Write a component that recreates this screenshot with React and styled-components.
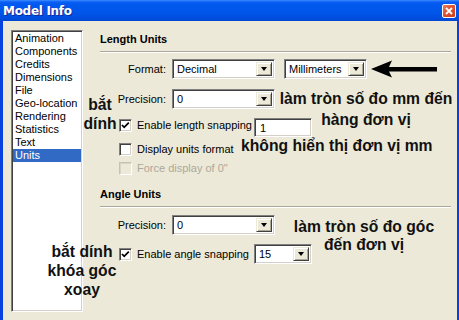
import styled, { createGlobalStyle } from "styled-components";

const Global = createGlobalStyle`
  html, body {
    margin: 0;
    padding: 0;
    background: #ece9d8;
  }
  body {
    font-family: "Liberation Sans", Arial, sans-serif;
    font-size: 11px;
    color: #000;
  }
`;

const Window = styled.div`
  position: relative;
  width: 459px;
  height: 320px;
  overflow: hidden;
  display: flex;
  flex-direction: column;
`;

const TitleBar = styled.div`
  height: 21px;
  flex: 0 0 21px;
  display: flex;
  align-items: center;
  justify-content: space-between;
  padding: 0 3px 0 3px;
  background: linear-gradient(
    to bottom,
    #3d8dff 0,
    #0b5ef5 2px,
    #0058ee 5px,
    #0056e8 60%,
    #004fe0 85%,
    #0046d2 100%
  );
`;

const Title = styled.span`
  color: #fff;
  font-family: "DejaVu Sans", "Liberation Sans", sans-serif;
  font-weight: bold;
  font-size: 12px;
  letter-spacing: -0.3px;
  text-shadow: 1px 1px 0 #0a2b9c;
`;

const CloseButton = styled.div`
  width: 12px;
  height: 12px;
  border: 1px solid #fff;
  border-radius: 2px;
  background: linear-gradient(135deg, #ec7a5a 0%, #e0522f 45%, #c9401e 100%);
  display: flex;
  align-items: center;
  justify-content: center;
`;

const Client = styled.div`
  flex: 1;
  display: flex;
  align-items: flex-start;
  background: #ece9d8;
  border-left: 3px solid #0842e0;
  border-right: 2px solid #0842e0;
  padding: 9px 6px 0 8px;
`;

const ListBox = styled.div`
  flex: 0 0 72px;
  height: 282px;
  box-sizing: border-box;
  background: #fff;
  border: 1px solid;
  border-color: #808080 #fff #fff #808080;
  box-shadow: inset 1px 1px #404040, inset -1px -1px #d4d0c8;
  padding: 1px;
`;

const ListItem = styled.div`
  height: 13px;
  line-height: 13px;
  padding-left: 2px;
  white-space: nowrap;
  background: ${(p) => (p.$selected ? "#316ac5" : "transparent")};
  color: ${(p) => (p.$selected ? "#fff" : "#000")};
`;

const Panel = styled.div`
  flex: 1;
  margin-left: 17px;
  display: flex;
  flex-direction: column;
`;

const SectionTitle = styled.div`
  font-weight: bold;
  line-height: 13px;
  margin-top: ${(p) => p.$top}px;
`;

const Rule = styled.div`
  height: 0;
  border-top: 1px solid #aca899;
  border-bottom: 1px solid #fff;
  margin-top: 5px;
`;

const FieldRow = styled.div`
  display: flex;
  align-items: center;
  height: 20px;
  margin-top: ${(p) => p.$top}px;
`;

const Label = styled.div`
  flex: 0 0 72px;
  box-sizing: border-box;
  padding-right: 6px;
  text-align: right;
`;

const Sunken = styled.div`
  box-sizing: border-box;
  background: #fff;
  border: 1px solid;
  border-color: #808080 #fff #fff #808080;
  box-shadow: inset 1px 1px #404040, inset -1px -1px #d4d0c8;
`;

const ComboBox = styled(Sunken)`
  width: ${(p) => p.$w}px;
  height: 20px;
  margin-left: ${(p) => p.$ml || 0}px;
  display: flex;
  align-items: center;
  padding: 2px;
  flex-shrink: 0;
`;

const Value = styled.span`
  flex: 1;
  padding-left: 2px;
  white-space: nowrap;
`;

const DropButton = styled.div`
  width: 16px;
  align-self: stretch;
  box-sizing: border-box;
  background: #ece9d8;
  border: 1px solid;
  border-color: #ece9d8 #404040 #404040 #ece9d8;
  box-shadow: inset 1px 1px #fff, inset -1px -1px #aca899;
  display: flex;
  align-items: center;
  justify-content: center;

  &::after {
    content: "";
    border-left: 3.5px solid transparent;
    border-right: 3.5px solid transparent;
    border-top: 4px solid #000;
  }
`;

const TextBox = styled(Sunken)`
  width: ${(p) => p.$w}px;
  height: 19px;
  margin-top: -1px;
  padding: 3px 0 0 5px;
  line-height: 13px;
  flex-shrink: 0;
`;

const CheckRow = styled.div`
  display: flex;
  align-items: ${(p) => (p.$center ? "center" : "flex-start")};
  height: ${(p) => (p.$center ? 20 : 13)}px;
  padding-left: 19px;
  margin-top: ${(p) => p.$top}px;
  color: ${(p) => (p.$disabled ? "#aca899" : "#000")};
`;

const Box = styled(Sunken)`
  width: 13px;
  height: 13px;
  flex: 0 0 13px;
  background: ${(p) => (p.$disabled ? "#ece9d8" : "#fff")};
  border-color: ${(p) =>
    p.$disabled ? "#c5c2b2 #fff #fff #c5c2b2" : "#808080 #fff #fff #808080"};
  box-shadow: ${(p) =>
    p.$disabled
      ? "inset 1px 1px #d8d5c6"
      : "inset 1px 1px #404040, inset -1px -1px #d4d0c8"};
  display: flex;
  align-items: center;
  justify-content: center;
`;

const CheckText = styled.span`
  line-height: 13px;
  margin-left: 5px;
  white-space: nowrap;
  flex: ${(p) => (p.$w ? `0 0 ${p.$w}px` : "0 0 auto")};
`;

const Note = styled.div`
  position: absolute;
  left: ${(p) => p.$x}px;
  top: ${(p) => p.$y}px;
  width: ${(p) => p.$w}px;
  text-align: ${(p) => (p.$left ? "left" : "center")};
  font-family: "Liberation Sans", Arial, sans-serif;
  font-weight: bold;
  font-size: 15.7px;
  line-height: ${(p) => p.$lh || 19}px;
  color: #111;
  white-space: nowrap;
`;

const items = [
  "Animation",
  "Components",
  "Credits",
  "Dimensions",
  "File",
  "Geo-location",
  "Rendering",
  "Statistics",
  "Text",
  "Units",
];

const Check = ({ checked, disabled }) => (
  <Box $disabled={disabled}>
    {checked && (
      <svg width="9" height="9" viewBox="0 0 9 9">
        <polyline
          points="1,4 3.2,6.3 7.8,1.7"
          fill="none"
          stroke="#000"
          strokeWidth="1.8"
        />
      </svg>
    )}
  </Box>
);

const Combo = ({ value, ...rest }) => (
  <ComboBox {...rest}>
    <Value>{value}</Value>
    <DropButton />
  </ComboBox>
);

const Arrow = () => (
  <svg width="67" height="20" viewBox="0 0 67 20" style={{ marginLeft: 4 }}>
    <path d="M0 10 L21 1.5 L18 8 L66 8 L66 12.5 L18 12.5 L21 18.5 Z" fill="#000" />
  </svg>
);

export default function App() {
  return (
    <>
      <Global />
      <Window>
        <TitleBar>
          <Title>Model Info</Title>
          <CloseButton>
            <svg width="8" height="8" viewBox="0 0 8 8">
              <path d="M1 1 L7 7 M7 1 L1 7" stroke="#fff" strokeWidth="1.8" />
            </svg>
          </CloseButton>
        </TitleBar>
        <Client>
          <ListBox>
            {items.map((it) => (
              <ListItem key={it} $selected={it === "Units"}>
                {it}
              </ListItem>
            ))}
          </ListBox>
          <Panel>
            <SectionTitle $top={3}>Length Units</SectionTitle>
            <Rule />
            <FieldRow $top={6}>
              <Label>Format:</Label>
              <Combo $w={103} value="Decimal" />
              <Combo $w={83} $ml={9} value="Millimeters" />
              <Arrow />
            </FieldRow>
            <FieldRow $top={10}>
              <Label>Precision:</Label>
              <Combo $w={103} value="0" />
            </FieldRow>
            <CheckRow $top={10}>
              <Check checked />
              <CheckText $w={117}>Enable length snapping</CheckText>
              <TextBox $w={58}>1</TextBox>
            </CheckRow>
            <CheckRow $top={11}>
              <Check />
              <CheckText>Display units format</CheckText>
            </CheckRow>
            <CheckRow $top={6} $disabled>
              <Check disabled />
              <CheckText>Force display of 0"</CheckText>
            </CheckRow>
            <SectionTitle $top={13}>Angle Units</SectionTitle>
            <Rule />
            <FieldRow $top={7}>
              <Label>Precision:</Label>
              <Combo $w={103} value="0" />
            </FieldRow>
            <CheckRow $top={9} $center>
              <Check checked />
              <CheckText $w={117}>Enable angle snapping</CheckText>
              <Combo $w={58} value="15" />
            </CheckRow>
          </Panel>
        </Client>

        <Note $x={266} $y={88} $w={200} $lh={21}>
          làm tròn số đo mm đến
          <br />
          hàng đơn vị
        </Note>
        <Note $x={60} $y={95} $w={80}>
          bắt
          <br />
          dính
        </Note>
        <Note $x={241} $y={136} $w={200} $left>
          không hiển thị đơn vị mm
        </Note>
        <Note $x={264} $y={218} $w={200} $lh={18}>
          làm tròn số đo góc
          <br />
          đến đơn vị
        </Note>
        <Note $x={32} $y={242} $w={100}>
          bắt dính
          <br />
          khóa góc
          <br />
          xoay
        </Note>
      </Window>
    </>
  );
}
